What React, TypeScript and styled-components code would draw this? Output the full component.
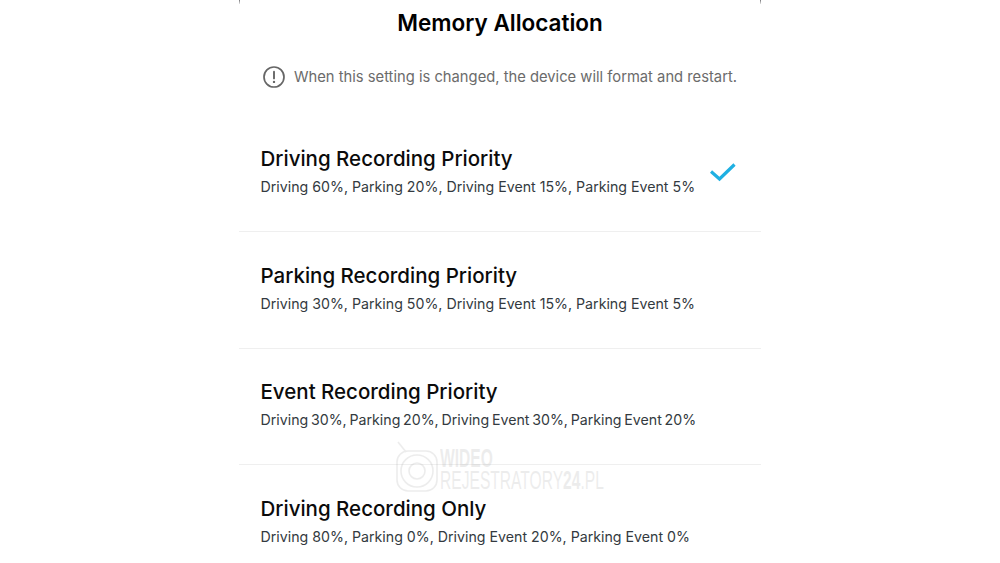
import React from 'react';
import styled, { createGlobalStyle } from 'styled-components';

interface AllocationOption {
  title: string;
  detail: string;
  selected?: boolean;
  tight?: boolean;
}

const options: AllocationOption[] = [
  {
    title: 'Driving Recording Priority',
    detail: 'Driving 60%, Parking 20%, Driving Event 15%, Parking Event 5%',
    selected: true
  },
  {
    title: 'Parking Recording Priority',
    detail: 'Driving 30%, Parking 50%, Driving Event 15%, Parking Event 5%'
  },
  {
    title: 'Event Recording Priority',
    detail: 'Driving 30%, Parking 20%, Driving Event 30%, Parking Event 20%',
    tight: true
  },
  {
    title: 'Driving Recording Only',
    detail: 'Driving 80%, Parking 0%, Driving Event 20%, Parking Event 0%'
  }
];

const GlobalStyle = createGlobalStyle`
  html, body {
    margin: 0;
    padding: 0;
    background: #fff;
    overflow: hidden;
  }
  body {
    font-family: Inter, "Liberation Sans", sans-serif;
  }
`;

const Page = styled.div`
  position: relative;
  width: 1000px;
  height: 563px;
  overflow: hidden;
  display: flex;
  justify-content: center;
  background: #fff;
`;

const Panel = styled.main`
  position: relative;
  width: 522px;
`;

const CornerTick = styled.span<{ $side: 'left' | 'right' }>`
  position: absolute;
  top: 0;
  ${props => props.$side}: 0;
  width: 1px;
  height: 4px;
  background: linear-gradient(#77777a, #e4e4e4);
`;

const Title = styled.h1`
  margin: 0;
  height: 46px;
  font-size: 22.5px;
  line-height: 45px;
  font-weight: 600;
  color: #000;
  text-align: center;
`;

const Notice = styled.div`
  display: flex;
  align-items: center;
  gap: 9px;
  height: 61px;
  margin-bottom: 9px;
  padding-left: 24px;
  font-size: 14.75px;
  color: #6b6b6b;
`;

const Options = styled.ul`
  list-style: none;
  margin: 0;
  padding: 0;
`;

const OptionRow = styled.li`
  height: 116.4px;
  box-sizing: border-box;
  padding: 0 25px 4px 21.5px;
  display: flex;
  align-items: center;
  justify-content: space-between;
  border-bottom: 1px solid #efefef;

  &:last-child {
    border-bottom: none;
  }
`;

const OptionText = styled.div`
  display: flex;
  flex-direction: column;
  gap: 5px;
`;

const OptionTitle = styled.div`
  font-size: 20.5px;
  line-height: 26px;
  font-weight: 500;
  color: #0b0b0b;
`;

const OptionDetail = styled.div<{ $tight?: boolean }>`
  font-size: 14.2px;
  line-height: 20px;
  color: #333a40;
  word-spacing: ${props => (props.$tight ? '-1.25px' : '0')};
`;

const Watermark = styled.div`
  position: absolute;
  left: 396px;
  top: 440px;
  display: flex;
  align-items: flex-start;
  opacity: 0.13;
  pointer-events: none;
`;

const WatermarkLines = styled.div`
  display: flex;
  flex-direction: column;
  margin-top: 7px;
  font-family: "Liberation Sans", sans-serif;
  color: #777;
  line-height: 22px;
  transform: scaleX(0.6);
  transform-origin: left center;
`;

const WatermarkStrong = styled.span`
  font-size: 26px;
  font-weight: 700;
`;

const WatermarkLight = styled.span`
  font-size: 26px;
  white-space: nowrap;

  b {
    font-weight: 700;
  }
`;

const InfoIcon = () => (
  <svg width="22" height="22" viewBox="0 0 22 22" fill="none">
    <circle cx="11" cy="11" r="10" stroke="#666" strokeWidth="1.7" />
    <path d="M11 5.8v6.6" stroke="#666" strokeWidth="1.9" strokeLinecap="round" />
    <circle cx="11" cy="15.9" r="1.2" fill="#666" />
  </svg>
);

const CheckIcon = () => (
  <svg width="26" height="20" viewBox="0 0 26 20" fill="none">
    <path d="M1 9.5 L9.5 17 L24.5 2.5" stroke="#1fb0e2" strokeWidth="3.2" />
  </svg>
);

const WatermarkLogo = () => (
  <svg width="44" height="56" viewBox="0 0 44 56" fill="none" stroke="#777" strokeWidth="1.6">
    <path d="M2 2 L10 12" />
    <rect x="1" y="11" width="40" height="40" rx="11" />
    <circle cx="21" cy="31" r="16" />
    <circle cx="21" cy="31" r="8" />
  </svg>
);

const App: React.FC = () => {
  return (
    <Page>
      <GlobalStyle />
      <Panel>
        <CornerTick $side="left" />
        <CornerTick $side="right" />
        <Title>Memory Allocation</Title>
        <Notice>
          <InfoIcon />
          When this setting is changed, the device will format and restart.
        </Notice>
        <Options>
          {options.map(option => (
            <OptionRow key={option.title}>
              <OptionText>
                <OptionTitle>{option.title}</OptionTitle>
                <OptionDetail $tight={option.tight}>{option.detail}</OptionDetail>
              </OptionText>
              {option.selected && <CheckIcon />}
            </OptionRow>
          ))}
        </Options>
      </Panel>
      <Watermark>
        <WatermarkLogo />
        <WatermarkLines>
          <WatermarkStrong>WIDEO</WatermarkStrong>
          <WatermarkLight>
            REJESTRATORY<b>24</b>.PL
          </WatermarkLight>
        </WatermarkLines>
      </Watermark>
    </Page>
  );
};

export default App;
